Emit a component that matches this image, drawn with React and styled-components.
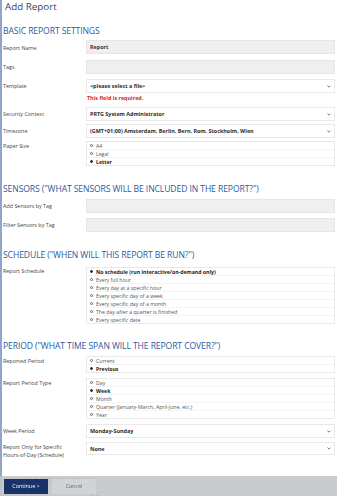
import React from "react";
import styled, { createGlobalStyle } from "styled-components";

const GlobalStyle = createGlobalStyle`
  html, body {
    margin: 0;
    padding: 0;
    background: #fff;
  }
  body {
    font-family: "Open Sans", "Noto Sans", sans-serif;
    color: #333;
  }
`;

const Page = styled.div`
  border-left: 2px solid #93a4cb;
  padding: 0 2px 40px 1px;
  min-height: 560px;
  display: flow-root;
`;

const Title = styled.h1`
  margin: 0;
  padding: 0 0 0 2px;
  height: 24px;
  font-size: 9.8px;
  font-weight: 400;
  line-height: 14px;
  color: #33465f;
`;

/* margin-top includes the 5px of the row above (the margins collapse) */
const SectionTitle = styled.h2`
  margin: ${(p) => p.$mt ?? 16}px 0 0 0;
  padding: 0;
  font-size: 8.6px;
  font-weight: 400;
  line-height: 14px;
  height: ${(p) => p.$h ?? 17}px;
  color: #2b5aa0;
  letter-spacing: -0.1px;
  white-space: nowrap;
`;

const Row = styled.div`
  display: grid;
  grid-template-columns: 83px 1fr;
  margin-bottom: ${(p) => p.$gap ?? 5}px;
`;

const Label = styled.div`
  font-size: 5.4px;
  line-height: 8px;
  color: #444;
  padding-top: ${(p) => p.$top ?? 3}px;
`;

const Field = styled.div`
  display: flex;
  flex-direction: column;
`;

const TextBox = styled.div`
  height: 14px;
  background: #efefef;
  border: 1px solid #e6e6e6;
  box-sizing: border-box;
  display: flex;
  align-items: center;
  padding-left: 3px;
  font-size: 5.4px;
  font-weight: 700;
  color: #333;
`;

const SelectBox = styled.div`
  height: ${(p) => p.$h ?? 14}px;
  background: #fff;
  border: 1px solid #e9e9e9;
  box-sizing: border-box;
  display: flex;
  align-items: center;
  justify-content: space-between;
  padding: 0 3px 0 3px;
  font-size: 5.4px;
  font-weight: 700;
  color: #2d2d2d;
`;

const Arrow = styled.svg`
  width: 4px;
  height: 3px;
  flex: none;
`;

const ErrorText = styled.div`
  font-size: 5.4px;
  font-weight: 700;
  color: #d2232a;
  line-height: 8px;
  height: 9px;
  padding: 1px 0 0 1px;
  box-sizing: border-box;
`;

const RadioGroup = styled.div`
  border: 1px solid #e9e9e9;
  background: #fff;
`;

const Option = styled.div`
  height: 7px;
  display: flex;
  align-items: center;
  gap: 3px;
  padding-left: 3px;
  font-size: 5.2px;
  font-weight: ${(p) => (p.$on ? 700 : 400)};
  color: ${(p) => (p.$on ? "#222" : "#555")};
  border-bottom: 1px solid #f4f4f4;
  &:last-child {
    border-bottom: none;
  }
`;

const Dot = styled.span`
  width: 3px;
  height: 3px;
  border-radius: 50%;
  box-sizing: border-box;
  flex: none;
  border: 0.8px solid ${(p) => (p.$on ? "#222" : "#666")};
  background: ${(p) => (p.$on ? "#222" : "#fff")};
`;

const Footer = styled.div`
  position: fixed;
  left: 0;
  right: 0;
  bottom: 0;
  height: 20px;
  background: rgba(195, 196, 198, 0.9);
  display: flex;
  align-items: center;
  gap: 4px;
  padding-left: 4px;
`;

const Button = styled.button`
  width: 44px;
  height: 15px;
  border: none;
  padding: 0;
  font-family: inherit;
  font-size: 5.4px;
  color: ${(p) => (p.$primary ? "#fff" : "#6a6a6a")};
  background: ${(p) => (p.$primary ? "#17336a" : "#d2d3d5")};
`;

const Select = ({ value, h }) => (
  <SelectBox $h={h}>
    <span>{value}</span>
    <Arrow viewBox="0 0 4 3">
      <path d="M0.4 0.6 L2 2.2 L3.6 0.6" fill="none" stroke="#555" strokeWidth="0.8" />
    </Arrow>
  </SelectBox>
);

const Radios = ({ items, selected }) => (
  <RadioGroup>
    {items.map((it) => (
      <Option key={it} $on={it === selected}>
        <Dot $on={it === selected} />
        {it}
      </Option>
    ))}
  </RadioGroup>
);

export default function App() {
  return (
    <>
      <GlobalStyle />
      <Page>
        <Title>Add Report</Title>
        <SectionTitle $mt={0} $h={16}>BASIC REPORT SETTINGS</SectionTitle>

        <Row $gap={6}>
          <Label $top={4}>Report Name</Label>
          <TextBox>Report</TextBox>
        </Row>
        <Row>
          <Label>Tags</Label>
          <TextBox />
        </Row>
        <Row>
          <Label>Template</Label>
          <Field>
            <Select value="<please select a file>" />
            <ErrorText>This field is required.</ErrorText>
          </Field>
        </Row>
        <Row $gap={3}>
          <Label>Security Context</Label>
          <Select value="PRTG System Administrator" />
        </Row>
        <Row $gap={3}>
          <Label>Timezone</Label>
          <Select value="(GMT+01:00) Amsterdam, Berlin, Bern, Rom, Stockholm, Wien" />
        </Row>
        <Row>
          <Label $top={1}>Paper Size</Label>
          <Radios items={["A4", "Legal", "Letter"]} selected="Letter" />
        </Row>

        <SectionTitle>SENSORS ("WHAT SENSORS WILL BE INCLUDED IN THE REPORT?")</SectionTitle>
        <Row>
          <Label>Add Sensors by Tag</Label>
          <TextBox />
        </Row>
        <Row>
          <Label>Filter Sensors by Tag</Label>
          <TextBox />
        </Row>

        <SectionTitle $h={19}>SCHEDULE ("WHEN WILL THIS REPORT BE RUN?")</SectionTitle>
        <Row>
          <Label $top={0}>Report Schedule</Label>
          <Radios
            items={[
              "No schedule (run interactive/on-demand only)",
              "Every full hour",
              "Every day at a specific hour",
              "Every specific day of a week",
              "Every specific day of a month",
              "The day after a quarter is finished",
              "Every specific date",
            ]}
            selected="No schedule (run interactive/on-demand only)"
          />
        </Row>

        <SectionTitle $mt={15}>PERIOD ("WHAT TIME SPAN WILL THE REPORT COVER?")</SectionTitle>
        <Row>
          <Label $top={1}>Reported Period</Label>
          <Radios items={["Current", "Previous"]} selected="Previous" />
        </Row>
        <Row>
          <Label $top={1}>Report Period Type</Label>
          <Radios
            items={["Day", "Week", "Month", "Quarter (January-March, April-June, etc.)", "Year"]}
            selected="Week"
          />
        </Row>
        <Row $gap={4}>
          <Label>Week Period</Label>
          <Select value="Monday-Sunday" />
        </Row>
        <Row>
          <Label $top={1}>
            Report Only for Specific
            <br />
            Hours-of-Day (Schedule)
          </Label>
          <Select value="None" h={13} />
        </Row>

        <SectionTitle>INCLUDE PERCENTILES</SectionTitle>
        <Row>
          <Label $top={0}>Percentile Results</Label>
          <Radios
            items={["Do not show percentiles", "Show percentiles"]}
            selected="Do not show percentiles"
          />
        </Row>
      </Page>
      <Footer>
        <Button $primary>Continue &gt;</Button>
        <Button>Cancel</Button>
      </Footer>
    </>
  );
}
